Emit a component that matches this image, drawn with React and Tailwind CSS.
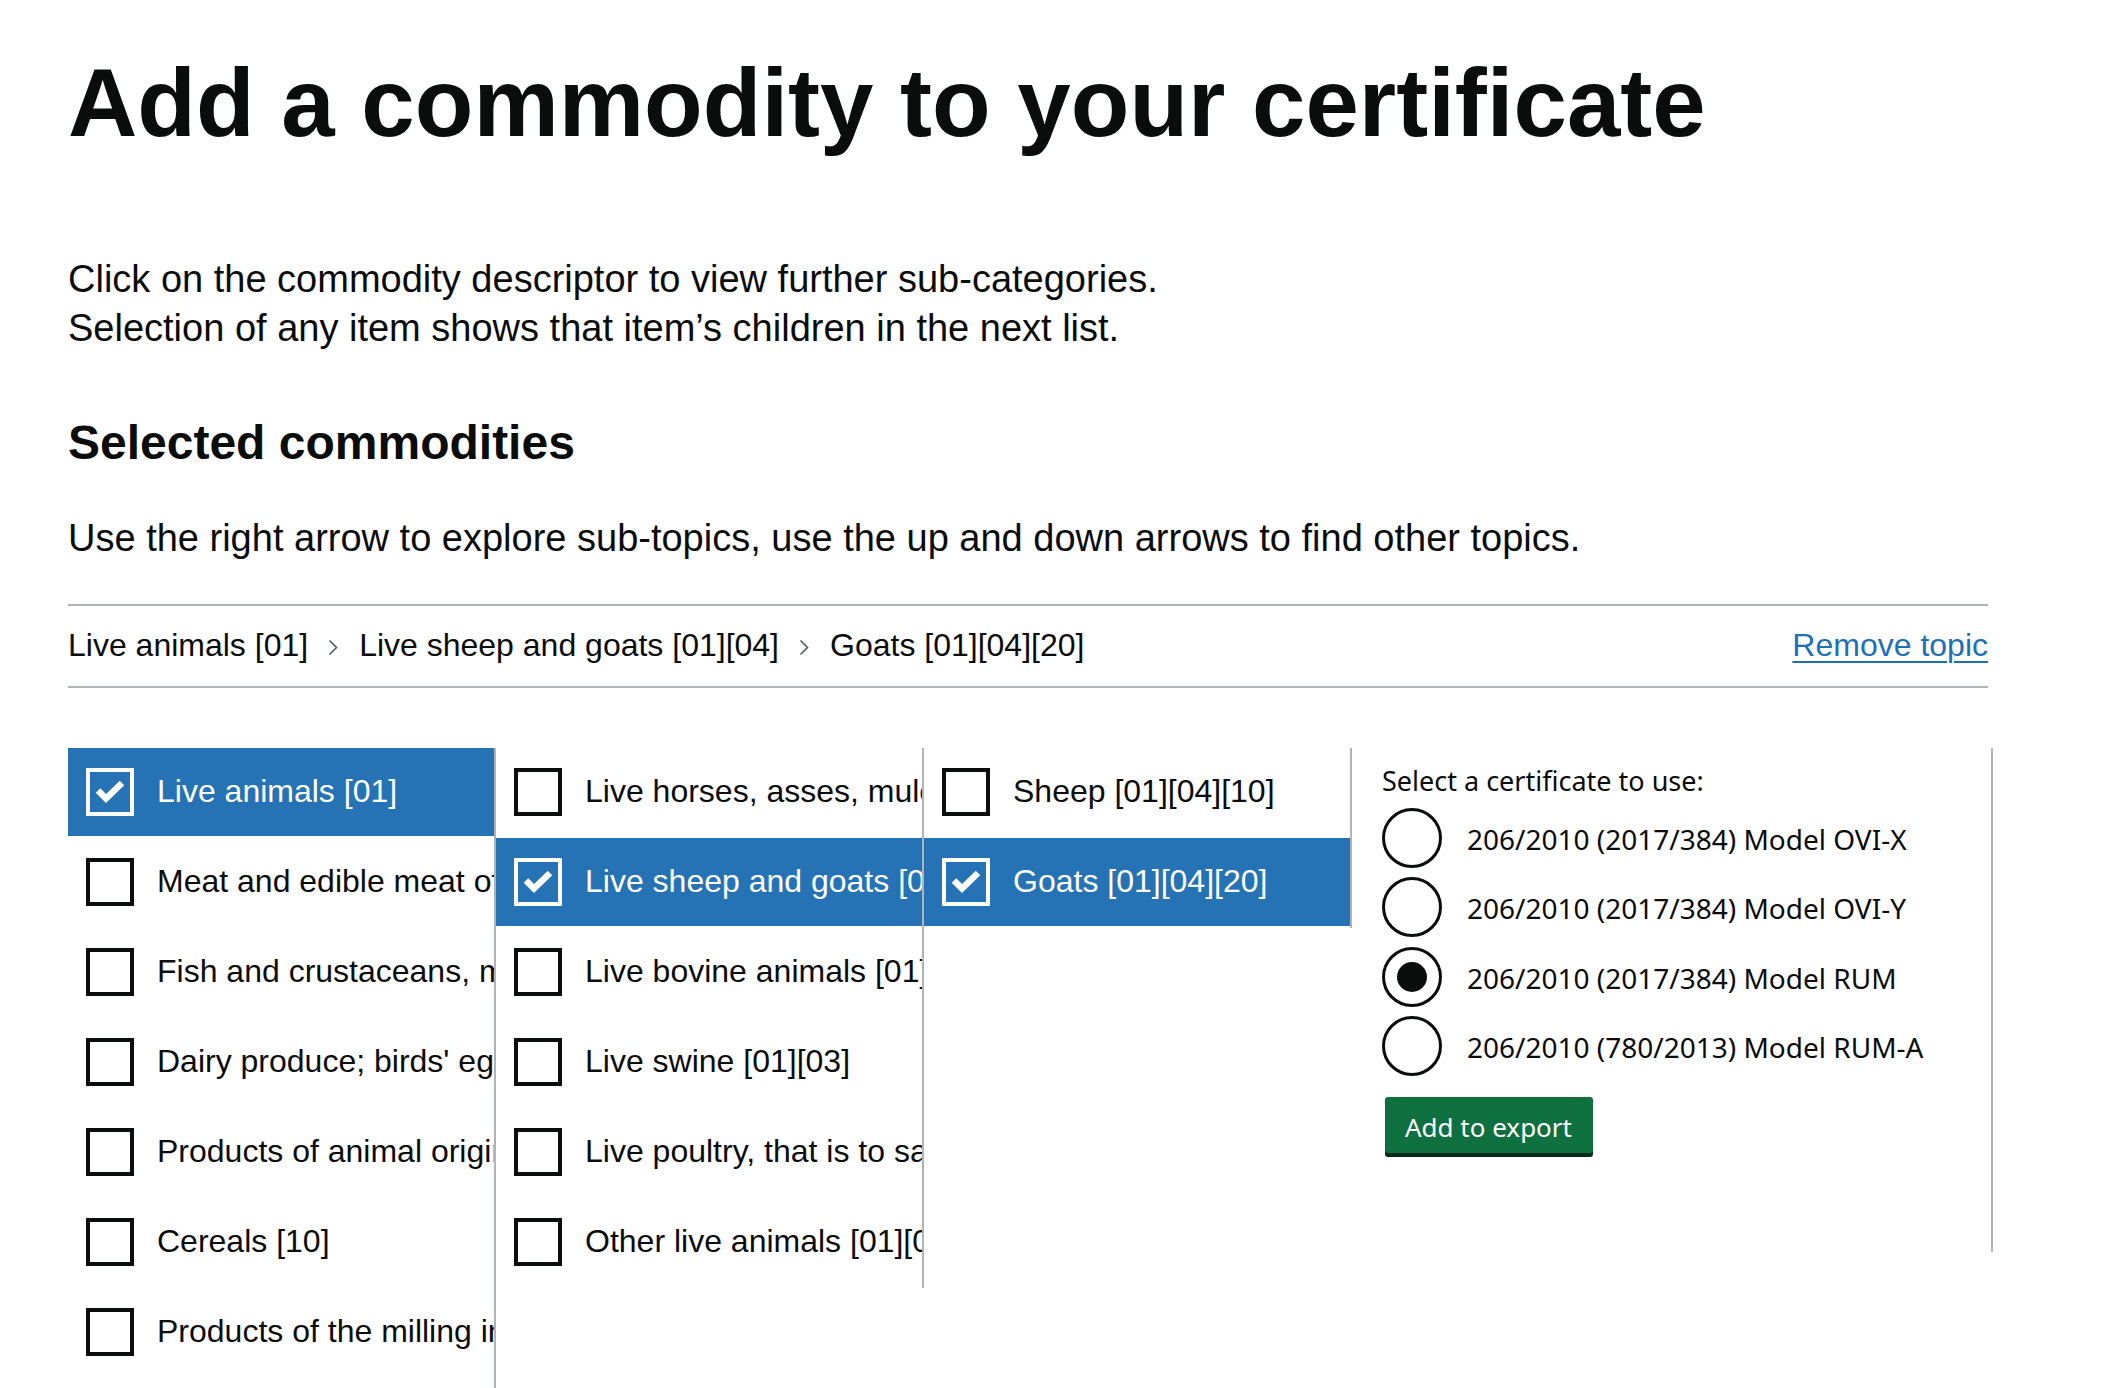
import React from "react";

const col1 = [
  { label: "Live animals [01]", checked: true },
  { label: "Meat and edible meat offal [02]" },
  { label: "Fish and crustaceans, molluscs and other aquatic invertebrates [03]" },
  { label: "Dairy produce; birds' eggs; natural honey; edible products of animal origin [04]" },
  { label: "Products of animal origin, not elsewhere specified or included [05]" },
  { label: "Cereals [10]" },
  { label: "Products of the milling industry; malt; starches; inulin; wheat gluten [11]" },
  { label: "Oil seeds and oleaginous fruits [12]" },
];

const col2 = [
  { label: "Live horses, asses, mules and hinnies [01][01]" },
  { label: "Live sheep and goats [01][04]", checked: true },
  { label: "Live bovine animals [01][02]" },
  { label: "Live swine [01][03]" },
  { label: "Live poultry, that is to say, fowls of the species Gallus domesticus [01][05]" },
  { label: "Other live animals [01][06]" },
];

const col3 = [
  { label: "Sheep [01][04][10]" },
  { label: "Goats [01][04][20]", checked: true },
];

const certs = [
  { label: "206/2010 (2017/384) Model OVI-X" },
  { label: "206/2010 (2017/384) Model OVI-Y" },
  { label: "206/2010 (2017/384) Model RUM", checked: true },
  { label: "206/2010 (780/2013) Model RUM-A" },
];

function Checkbox({ checked }) {
  return (
    <div
      className={
        checked
          ? "w-[48px] h-[48px] shrink-0 border-[4px] border-white flex items-center justify-center"
          : "w-[48px] h-[48px] shrink-0 border-[4px] border-[#0b0c0c] bg-white"
      }
    >
      {checked && (
        <svg width="40" height="40" viewBox="4 4 40 40" className="block">
          <polyline
            points="12,22.5 20,30.5 36,15"
            fill="none"
            stroke="#ffffff"
            strokeWidth="6.5"
            strokeLinejoin="miter"
            strokeLinecap="butt"
          />
        </svg>
      )}
    </div>
  );
}

function Column({ items }) {
  return (
    <div className="w-[428px] shrink-0 border-r-2 border-[#b1b4b6]">
      {items.map((item, i) => (
        <div
          key={i}
          className={
            item.checked
              ? "flex h-[88px] mb-[2px] items-center overflow-hidden whitespace-nowrap pl-[18px] bg-[#2572b5] text-white"
              : "flex h-[88px] mb-[2px] items-center overflow-hidden whitespace-nowrap pl-[18px] text-[#0b0c0c]"
          }
        >
          <Checkbox checked={item.checked} />
          <span className="ml-[23px] mb-[2px] text-[32px] leading-[40px]">{item.label}</span>
        </div>
      ))}
    </div>
  );
}

function Chevron() {
  return (
    <svg
      width="10"
      height="17"
      viewBox="0 0 10 17"
      className="block shrink-0 ml-[20px] mr-[21px] mt-[5px]"
    >
      <polyline points="1.5,1.5 8.5,8.5 1.5,15.5" fill="none" stroke="#505a5f" strokeWidth="1.6" />
    </svg>
  );
}

export default function App() {
  return (
    <div className="h-[1388px] overflow-hidden bg-white pl-[68px] pt-[53px] text-[#0b0c0c] font-['Liberation_Sans',Arial,sans-serif]">
      <div className="w-[1920px]">
        <h1 className="text-[96px] leading-[100px] font-bold">Add a commodity to your certificate</h1>
        <p className="mt-[102px] text-[38px] leading-[49px]">
          Click on the commodity descriptor to view further sub-categories.
          <br />
          Selection of any item shows that item’s children in the next list.
        </p>
        <h2 className="mt-[60px] text-[48px] leading-[60px] font-bold">Selected commodities</h2>
        <p className="mt-[41px] text-[38px] leading-[49px]">
          Use the right arrow to explore sub-topics, use the up and down arrows to find other topics.
        </p>

        <div className="mt-[41px] border-t-2 border-b-2 border-[#b1b4b6] flex items-start justify-between pt-[19px] pb-[21px] text-[32px] leading-[40px]">
          <div className="flex items-center whitespace-nowrap">
            <span>Live animals [01]</span>
            <Chevron />
            <span>Live sheep and goats [01][04]</span>
            <Chevron />
            <span>Goats [01][04][20]</span>
          </div>
          <a
            href="#"
            className="text-[#1d70b8] underline decoration-2 underline-offset-[5px] whitespace-nowrap"
          >
            Remove topic
          </a>
        </div>

        <div className="mt-[60px] flex items-start">
          <Column items={col1} />
          <Column items={col2} />
          <Column items={col3} />
          <div className="w-[641px] shrink-0 border-r-2 border-[#b1b4b6] pl-[30px] pt-[15px] pb-[99px] font-['Noto_Sans',sans-serif]">
            <div className="text-[27px] leading-[36px] whitespace-nowrap">Select a certificate to use:</div>
            <div className="mt-[9px] w-[543px] overflow-hidden flex flex-col gap-[9.33px]">
              {certs.map((c, i) => (
                <div key={i} className="flex items-center h-[60px] whitespace-nowrap">
                  <div className="w-[60px] h-[60px] shrink-0 rounded-full border-[3px] border-[#0b0c0c] flex items-center justify-center">
                    {c.checked && <div className="w-[30px] h-[30px] rounded-full bg-[#0b0c0c]" />}
                  </div>
                  <span className="ml-[25px] mt-[2px] text-[28px] leading-[36px]">{c.label}</span>
                </div>
              ))}
            </div>
            <button
              type="button"
              className="mt-[21px] ml-[3px] h-[56px] w-[208px] pl-[20px] pt-[4px] flex items-center bg-[#0f703f] text-white text-[26px] leading-[32px] rounded-[3px] shadow-[0_4px_0_#002d18]"
            >
              Add to export
            </button>
          </div>
        </div>
      </div>
    </div>
  );
}
